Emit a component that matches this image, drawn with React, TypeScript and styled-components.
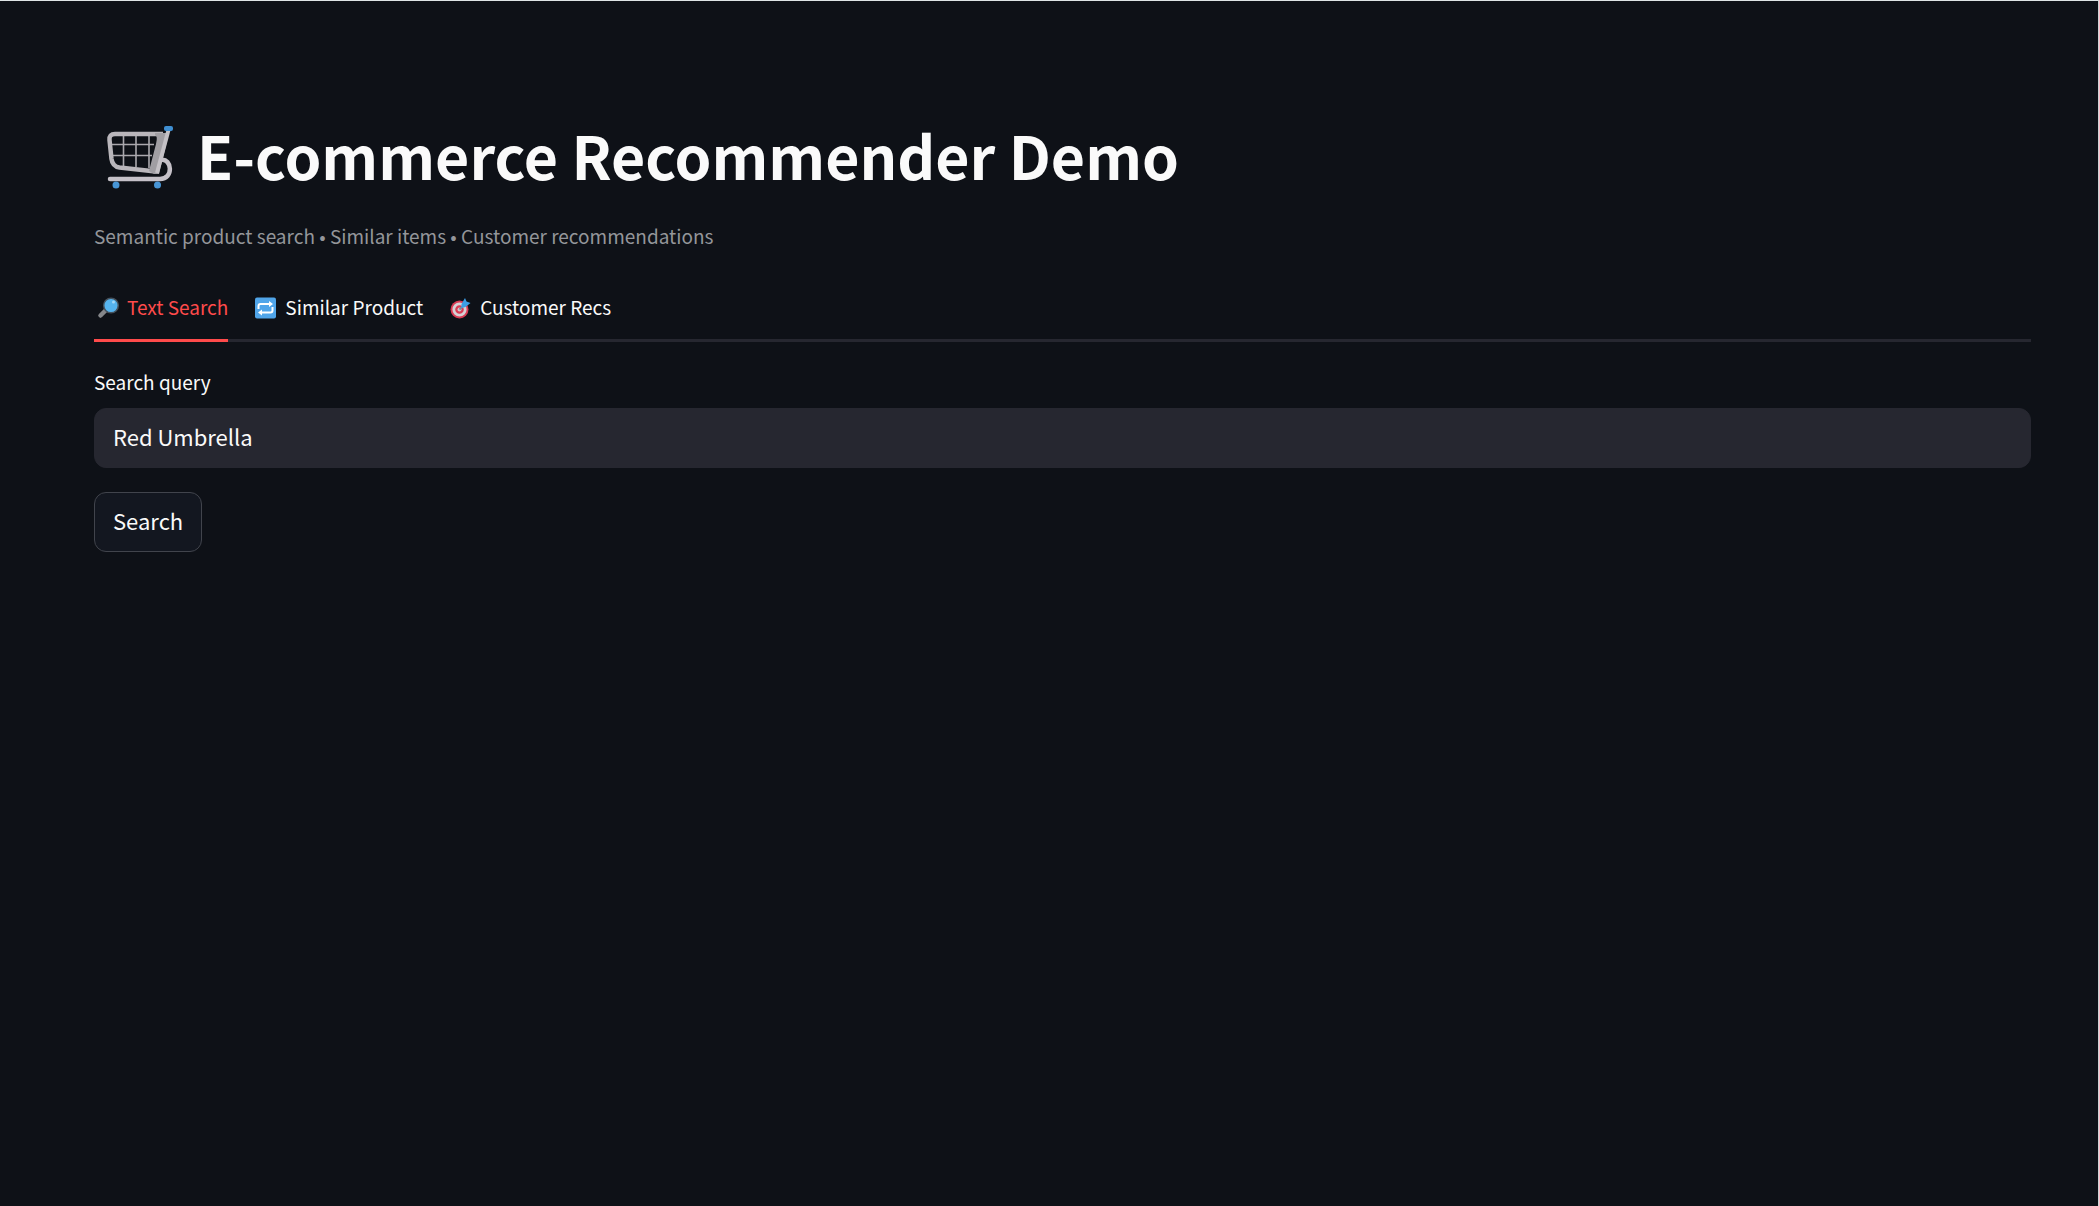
import React, { useState } from "react";
import styled, { createGlobalStyle } from "styled-components";

const GlobalStyle = createGlobalStyle`
  *, *::before, *::after { box-sizing: border-box; }
  body {
    margin: 0;
    background: #0e1117;
    color: #fafafa;
    font-family: "Noto Sans CJK JP", "Noto Sans", sans-serif;
  }
`;

const Page = styled.div`
  min-height: 100vh;
  border-top: 1px solid #dfe5e6;
  border-right: 1px solid #cfd3d6;
`;

const Main = styled.main`
  display: flex;
  flex-direction: column;
  padding: 116px 67px 120px 94px;
`;

const Title = styled.h1`
  display: flex;
  align-items: flex-start;
  gap: 13px;
  margin: 0;
  font-size: 59px;
  line-height: 75px;
  font-weight: 700;
`;

const Caption = styled.p`
  margin: 23px 0 0;
  color: #94969a;
  font-size: 19px;
  line-height: 32px;
`;

const TabList = styled.div`
  display: flex;
  gap: 24px;
  height: 60px;
  margin-top: 30px;
  box-shadow: inset 0 -3px #262730;
`;

const Tab = styled.button<{ $active: boolean }>`
  display: flex;
  align-items: center;
  gap: 5px;
  padding: 0 0 11px;
  border: 0;
  background: none;
  box-shadow: ${(p) => (p.$active ? "inset 0 -3px #ff4b4b" : "none")};
  color: ${(p) => (p.$active ? "#ff4b4b" : "#fafafa")};
  font: inherit;
  font-size: 19px;
  line-height: 32px;
  white-space: nowrap;
  cursor: pointer;
`;

const Form = styled.form`
  display: flex;
  flex-direction: column;
  align-items: flex-start;
  margin-top: 24px;
`;

const Label = styled.label`
  margin-bottom: 10px;
  font-size: 19px;
  line-height: 32px;
`;

const TextInput = styled.input`
  width: 100%;
  height: 60px;
  padding: 0 18px 5px;
  border: 1px solid #262730;
  border-radius: 12px;
  outline: 0;
  background: #262730;
  color: #fafafa;
  font: inherit;
  font-size: 22px;
`;

const SubmitButton = styled.button`
  height: 60px;
  margin-top: 24px;
  padding: 0 18px 4px;
  border: 1px solid #41444c;
  border-radius: 12px;
  background: #131720;
  color: #fafafa;
  font: inherit;
  font-size: 22px;
  cursor: pointer;
`;

const CartIcon = () => (
  <svg width="90" height="80" viewBox="0 0 90 80" fill="none" aria-hidden="true">
    <g stroke="#aaa8ad" strokeWidth="1.6">
      <path d="M29.500 18v31M42 18v32M55 18v33M18 27.500h42M19 38.500h39" />
    </g>
    <path d="M69 17H21q-6 0-5.500 6l2 19q1 7.500 8 8.500l36 4" stroke="#b9b6bb" strokeWidth="4.500" strokeLinejoin="round" />
    <path d="M61 16h14L65 57h-5l-5-3 7-27q2-8-1-9z" fill="#a09ea3" />
    <path d="M74.500 13 63 56" stroke="#c4c1c6" strokeWidth="4" />
    <path d="M67 43c11-2 13 19-1 19H16" stroke="#c5c1c8" strokeWidth="4.500" strokeLinecap="round" />
    <rect x="70" y="9" width="9" height="5" rx="2" fill="#3f8fd2" />
    <circle cx="22" cy="68" r="3.500" fill="#4795d6" />
    <circle cx="63.500" cy="68" r="3.500" fill="#4795d6" />
  </svg>
);

const MagnifierIcon = () => (
  <svg width="28" height="24" viewBox="0 -2 28 24" aria-hidden="true">
    <path d="M6.500 18.500 11.500 13.500" stroke="#85878a" strokeWidth="4.500" strokeLinecap="round" />
    <circle cx="17" cy="8.500" r="7.300" fill="#55b4ef" stroke="#45515c" strokeWidth="1.500" />
    <circle cx="19.500" cy="5" r="1.500" fill="#a4dafa" />
  </svg>
);

const RepeatIcon = () => (
  <svg width="28" height="24" viewBox="0 -2 28 24" fill="none" aria-hidden="true">
    <rect x="3" y="0.500" width="21" height="21" rx="2" fill="#50a5e9" />
    <path d="M6.500 12V9q0-2 2-2H18M20.500 10v3.500q0 2-2 2H9" stroke="#fff" strokeWidth="2" />
    <path d="M17 4 21 7l-4 3zM10 12.500l-4 3 4 3z" fill="#fff" />
  </svg>
);

const TargetIcon = () => (
  <svg width="28" height="24" viewBox="0 -2 28 24" fill="none" aria-hidden="true">
    <circle cx="12.500" cy="12.500" r="9" fill="#d83b54" />
    <circle cx="12.500" cy="12.500" r="5.700" stroke="#d5d1d5" strokeWidth="2.800" />
    <circle cx="12.500" cy="12.500" r="2" fill="#d5c4ca" />
    <path d="m12.500 12.500 6-6" stroke="#778d9e" strokeWidth="2" />
    <path d="m14.500 7 3.500-6 1.500 3.500 4 1.500-5 4-4 1z" fill="#3d9ee5" />
  </svg>
);

const tabs = [
  { name: "Text Search", Icon: MagnifierIcon },
  { name: "Similar Product", Icon: RepeatIcon },
  { name: "Customer Recs", Icon: TargetIcon },
];

export default function App() {
  const [active, setActive] = useState(0);
  const [query, setQuery] = useState("Red Umbrella");

  return (
    <>
      <GlobalStyle />
      <Page>
        <Main>
          <Title>
            <CartIcon />
            E-commerce Recommender Demo
          </Title>
          <Caption>Semantic product search • Similar items • Customer recommendations</Caption>
          <TabList role="tablist">
            {tabs.map(({ name, Icon }, i) => (
              <Tab
                key={name}
                type="button"
                role="tab"
                aria-selected={i === active}
                $active={i === active}
                onClick={() => setActive(i)}
              >
                <Icon />
                {name}
              </Tab>
            ))}
          </TabList>
          <Form onSubmit={(e) => e.preventDefault()}>
            <Label htmlFor="query">Search query</Label>
            <TextInput id="query" type="text" value={query} onChange={(e) => setQuery(e.target.value)} />
            <SubmitButton type="submit">Search</SubmitButton>
          </Form>
        </Main>
      </Page>
    </>
  );
}
